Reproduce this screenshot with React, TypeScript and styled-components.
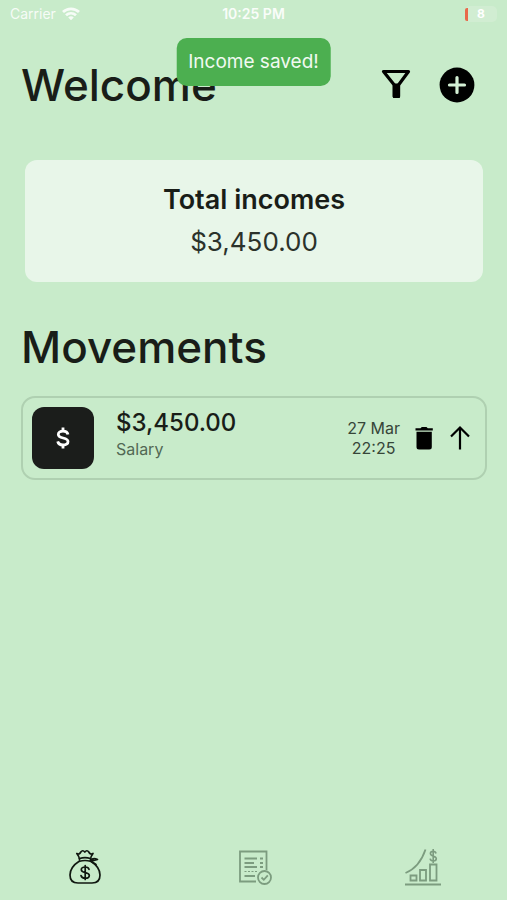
import React from 'react';
import styled, { createGlobalStyle } from 'styled-components';

const GlobalStyle = createGlobalStyle`
  *, *::before, *::after { box-sizing: border-box; }
  body {
    margin: 0;
    background: #c8ebca;
    color: #191d18;
    font-family: Inter, "Liberation Sans", sans-serif;
    font-optical-sizing: none;
  }
  h1, h2, h3, p { margin: 0; font-weight: 400; }
`;

const Screen = styled.div`
  position: relative;
  min-height: 100vh;
  display: flex;
  flex-direction: column;
`;

const StatusBar = styled.header`
  height: 28px;
  padding: 0 10px;
  display: grid;
  grid-template-columns: 1fr auto 1fr;
  align-items: center;
  color: #fff;
  font-size: 14px;
  line-height: 20px;
`;

const Carrier = styled.div`
  display: flex;
  align-items: center;
  gap: 6px;
  opacity: 0.85;
`;

const Clock = styled.time`
  font-size: 14px;
  font-weight: 600;
  opacity: 0.9;
`;

const Battery = styled.div`
  justify-self: end;
  display: flex;
  align-items: center;
  width: 32px;
  height: 16px;
  border-radius: 5px;
  background: #d1edd2;
  font-size: 12px;
  font-weight: 700;
  line-height: 16px;

  &::before {
    content: '';
    width: 3px;
    height: 13px;
    margin-right: 9px;
    border-radius: 2px 0 0 2px;
    background: #e8694a;
  }
`;

const Toast = styled.div`
  position: absolute;
  top: 38px;
  left: 50%;
  transform: translateX(-50%);
  padding: 12px;
  border-radius: 10px;
  background: #4caf50;
  color: #f1faf1;
  font-size: 19px;
  font-optical-sizing: auto;
  line-height: 24px;
  white-space: nowrap;
`;

const Main = styled.main`
  flex: 1;
  padding: 27px 20px 0 21px;
`;

const TitleRow = styled.div`
  display: flex;
  align-items: center;
  justify-content: space-between;
  padding-right: 12px;
`;

const Title = styled.h1`
  font-size: 44px;
  font-weight: 500;
  line-height: 60px;
`;

const Actions = styled.div`
  display: flex;
  gap: 26px;
`;

const IconButton = styled.button`
  display: flex;
  padding: 0;
  border: 0;
  background: none;
  color: #000;
  cursor: pointer;
`;

const Summary = styled.section`
  margin: 45px 4px 35px;
  padding: 20px;
  border-radius: 12px;
  background: #e8f6e9;
  text-align: center;
`;

const SummaryTitle = styled.h3`
  font-size: 27px;
  font-weight: 600;
  line-height: 40px;
`;

const SummaryAmount = styled.p`
  padding-top: 2px;
  font-size: 26px;
  line-height: 40px;
  color: #2b322b;
`;

const Movement = styled.article`
  display: flex;
  align-items: center;
  margin-top: 19px;
  padding: 9px 13px 9px 9px;
  border: 2px solid #afd0b1;
  border-radius: 14px;
`;

const Badge = styled.div`
  width: 62px;
  height: 62px;
  margin-right: 22px;
  display: grid;
  place-items: center;
  border-radius: 12px;
  background: #1b1d1b;
  color: #fff;
`;

const Details = styled.div`
  flex: 1;
  padding-bottom: 6px;
`;

const Amount = styled.p`
  font-size: 24px;
  font-weight: 500;
  line-height: 28px;
`;

const Category = styled.p`
  font-size: 16px;
  line-height: 24px;
  color: #526854;
`;

const Stamp = styled.time`
  margin-right: 12px;
  font-size: 16px;
  line-height: 20px;
  text-align: center;
  color: #364538;
`;

const RowActions = styled.div`
  display: flex;
  align-items: center;
  gap: 12px;
`;

const TabBar = styled.nav`
  height: 66px;
  display: grid;
  grid-template-columns: repeat(3, 1fr);
`;

const Tab = styled.button<{ $active?: boolean }>`
  display: grid;
  place-items: center;
  padding: 0;
  border: 0;
  background: none;
  color: ${({ $active }) => ($active ? '#101710' : '#7c9c7f')};
  cursor: pointer;
`;

const WifiIcon = () => (
  <svg width="18" height="14" viewBox="0 0 18 14" fill="none" stroke="currentColor" strokeWidth="2.8" aria-hidden="true">
    <path d="M1 5C5.5.8 12.500.8 17 5" />
    <path d="M4 8.300c2.900-2.600 7.100-2.600 10 0" />
    <path d="M9 13.200 6.200 10.400c1.600-1.400 4-1.400 5.600 0Z" fill="currentColor" stroke="none" />
  </svg>
);

const FilterIcon = () => (
  <svg width="34" height="34" viewBox="0 0 34 34" fill="none" stroke="#000" strokeWidth="3.200" strokeLinejoin="round" aria-hidden="true">
    <path d="M4.500 4.500h25L19.500 18v11.500h-4.200V18Z" />
    <path d="M15.300 18h4.200v11.500h-4.200Z" fill="#000" />
  </svg>
);

const AddIcon = () => (
  <svg width="36" height="36" viewBox="0 0 36 36" aria-hidden="true">
    <circle cx="18" cy="18" r="17.400" />
    <path d="M18 10.500v15M10.500 18h15" stroke="#d4f0d5" strokeWidth="3.200" strokeLinecap="round" />
  </svg>
);

const DollarIcon = () => (
  <svg width="16" height="26" viewBox="0 0 16 26" fill="none" stroke="currentColor" strokeWidth="2.800" strokeLinejoin="round" aria-hidden="true">
    <path d="M13 9.500C12.500 7.400 10.800 6.200 8 6.200c-3 0-4.700 1.300-4.700 3.300 0 4.700 9.700 2.300 9.700 7.100 0 2.100-2 3.400-5 3.400s-4.800-1.300-5.300-3.600" />
    <path d="M8 2.500v4M8 19.500v4" />
  </svg>
);

const TrashIcon = () => (
  <svg width="24" height="28" viewBox="0 0 24 28" aria-hidden="true">
    <path d="M4.500 7.800h15.300V23q0 2.500-2.500 2.500H7Q4.500 25.500 4.500 23ZM3.500 4.200h5L9.800 3h4.700l1.300 1.200h5v2.200H3.500Z" />
  </svg>
);

const ArrowUpIcon = () => (
  <svg width="24" height="28" viewBox="0 0 24 28" fill="none" stroke="#000" strokeWidth="2.200" aria-hidden="true">
    <path d="M12 25.500V4M3 12.500l9-9 9 9" />
  </svg>
);

const MoneyBagIcon = () => (
  <svg width="36" height="36" viewBox="0 0 36 36" fill="none" stroke="currentColor" strokeWidth="1.700" strokeLinecap="round" strokeLinejoin="round" aria-hidden="true">
    <path d="M12.500 12C7 15.500 3 20.500 3 26c0 6 3.500 8 8 8h14c4.500 0 8-2 8-8 0-5.500-4-10.500-9.500-14" />
    <path d="M12.500 10.500c-.3-2.500-1-4-2.700-6 1.700 1 3 .5 4-1.500 1.300-1.800 2.700-1.500 4 0 1.300-1.500 2.800-1.800 4 0 1 2 2.300 2.500 4.200 1.500-1.700 2-2.200 3.500-2.500 6" />
    <path d="M12.500 9.500c3.500-1 7.500-1 11 0M12.500 12.300c3.500-1 7.500-1 11 0M23.500 11.500c2-2.500 4.200-2.300 7-1l-6.500 1.700 5 3.300" />
    <path d="M22 20.300c-.3-1.500-1.700-2.300-3.800-2.300-2.400 0-3.900 1-3.900 2.700 0 3.900 8 2 8 5.700 0 1.800-1.600 2.800-4.100 2.800-2.300 0-3.800-.9-4.200-2.700M18.200 16.500v14" />
  </svg>
);

const ReportIcon = () => (
  <svg width="36" height="36" viewBox="0 0 36 36" fill="none" stroke="currentColor" strokeWidth="1.800" aria-hidden="true">
    <path d="M20 32.500H4v-30h26.500V21" />
    <path d="M8.500 9.500H21M8.500 14H18M8.500 18H21M8.500 27H19M24 9.500h3M24 14h3M24 18h3" />
    <path d="M8.500 22.500H22" strokeDasharray="2 1.500" strokeWidth="1.200" />
    <circle cx="28.500" cy="28.500" r="6.500" />
    <path d="m25.500 28.500 2.300 2.300 4-4.500" />
  </svg>
);

const GrowthIcon = () => (
  <svg width="38" height="38" viewBox="0 0 38 38" fill="none" stroke="currentColor" strokeWidth="1.800" aria-hidden="true">
    <path d="M1 36.500h36M6.500 27.500h6v5h-6ZM16 22h6v10.500h-6ZM26 16.500h6.500v16H26Z" />
    <path d="M1.500 25C10 21.500 17.500 13.500 21.500 1.500" />
    <path d="M32 5.500c-.3-1.500-1.200-2.200-2.800-2.200-1.700 0-2.800.9-2.800 2.300 0 3.200 5.900 2 5.900 5 0 1.500-1.200 2.400-3 2.400-1.800 0-2.900-.8-3.200-2.400M29.200 1v14" strokeWidth="1.600" />
  </svg>
);

export default function App() {
  return (
    <Screen>
      <GlobalStyle />
      <StatusBar>
        <Carrier>
          Carrier
          <WifiIcon />
        </Carrier>
        <Clock>10:25 PM</Clock>
        <Battery>8</Battery>
      </StatusBar>

      <Main>
        <TitleRow>
          <Title>Welcome</Title>
          <Actions>
            <IconButton aria-label="Filter"><FilterIcon /></IconButton>
            <IconButton aria-label="Add income"><AddIcon /></IconButton>
          </Actions>
        </TitleRow>

        <Summary>
          <SummaryTitle>Total incomes</SummaryTitle>
          <SummaryAmount>$3,450.00</SummaryAmount>
        </Summary>

        <Title as="h2">Movements</Title>
        <Movement>
          <Badge><DollarIcon /></Badge>
          <Details>
            <Amount>$3,450.00</Amount>
            <Category>Salary</Category>
          </Details>
          <Stamp>27 Mar<br />22:25</Stamp>
          <RowActions>
            <IconButton aria-label="Delete"><TrashIcon /></IconButton>
            <ArrowUpIcon />
          </RowActions>
        </Movement>
      </Main>

      <TabBar>
        <Tab $active aria-label="Incomes"><MoneyBagIcon /></Tab>
        <Tab aria-label="Expenses"><ReportIcon /></Tab>
        <Tab aria-label="Growth"><GrowthIcon /></Tab>
      </TabBar>

      <Toast role="status">Income saved!</Toast>
    </Screen>
  );
}
